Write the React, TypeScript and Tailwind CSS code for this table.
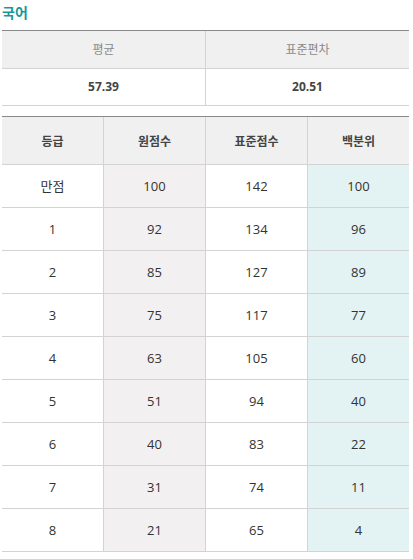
const STATS = [
  { label: '평균', value: '57.39' },
  { label: '표준편차', value: '20.51' },
]

const HEADERS = ['등급', '원점수', '표준점수', '백분위']

const ROWS = [
  ['만점', '100', '142', '100'],
  ['1', '92', '134', '96'],
  ['2', '85', '127', '89'],
  ['3', '75', '117', '77'],
  ['4', '63', '105', '60'],
  ['5', '51', '94', '40'],
  ['6', '40', '83', '22'],
  ['7', '31', '74', '11'],
  ['8', '21', '65', '4'],
]

const COL_BG = ['bg-white', 'bg-[#f3f0f1]', 'bg-white', 'bg-[#e3f2f2]']

export default function App() {
  return (
    <div className="min-h-screen bg-white font-['Open_Sans','Noto_Sans_CJK_KR',sans-serif]">
      <h2 className="px-[2px] pt-[3px] h-[30px] text-[14px] font-bold leading-[20px] text-[#17999a]">국어</h2>

      {/* 평균 / 표준편차 */}
      <div className="ml-[2px] w-[407px] border-t border-[#8a8a8a]">
        <div className="grid grid-cols-[203px_204px] border-b border-[#d3d3d3] bg-[#f0f0f0]">
          {STATS.map((s, i) => (
            <div
              key={s.label}
              className={`flex h-[37px] items-center justify-center text-[12px] text-[#8a8a8a] ${i > 0 ? 'border-l border-[#d3d3d3]' : ''}`}
            >
              {s.label}
            </div>
          ))}
        </div>
        <div className="grid grid-cols-[203px_204px] border-b border-[#d3d3d3]">
          {STATS.map((s, i) => (
            <div
              key={s.label}
              className={`flex h-[36px] items-center justify-center text-[12px] font-bold text-[#444] ${i > 0 ? 'border-l border-[#d3d3d3]' : ''}`}
            >
              {s.value}
            </div>
          ))}
        </div>
      </div>

      {/* 등급 컷 */}
      <div className="ml-[2px] mt-[10px] w-[407px] border-t border-[#8a8a8a]">
        <div className="grid grid-cols-[101px_102px_102px_102px] border-b border-[#d3d3d3] bg-[#f0f0f0]">
          {HEADERS.map((h, i) => (
            <div
              key={h}
              className={`flex h-[47px] items-center justify-center pt-[3px] text-[12px] font-bold text-[#444] ${i > 0 ? 'border-l border-[#d3d3d3]' : ''}`}
            >
              {h}
            </div>
          ))}
        </div>
        {ROWS.map((row) => (
          <div key={row[0]} className="grid grid-cols-[101px_102px_102px_102px] border-b border-[#d3d3d3]">
            {row.map((cell, i) => (
              <div
                key={i}
                className={`flex h-[42px] items-center justify-center pt-[2px] text-[13px] text-[#333] ${COL_BG[i]} ${i > 0 ? 'border-l border-[#d3d3d3]' : ''}`}
              >
                {cell}
              </div>
            ))}
          </div>
        ))}
      </div>
    </div>
  )
}
